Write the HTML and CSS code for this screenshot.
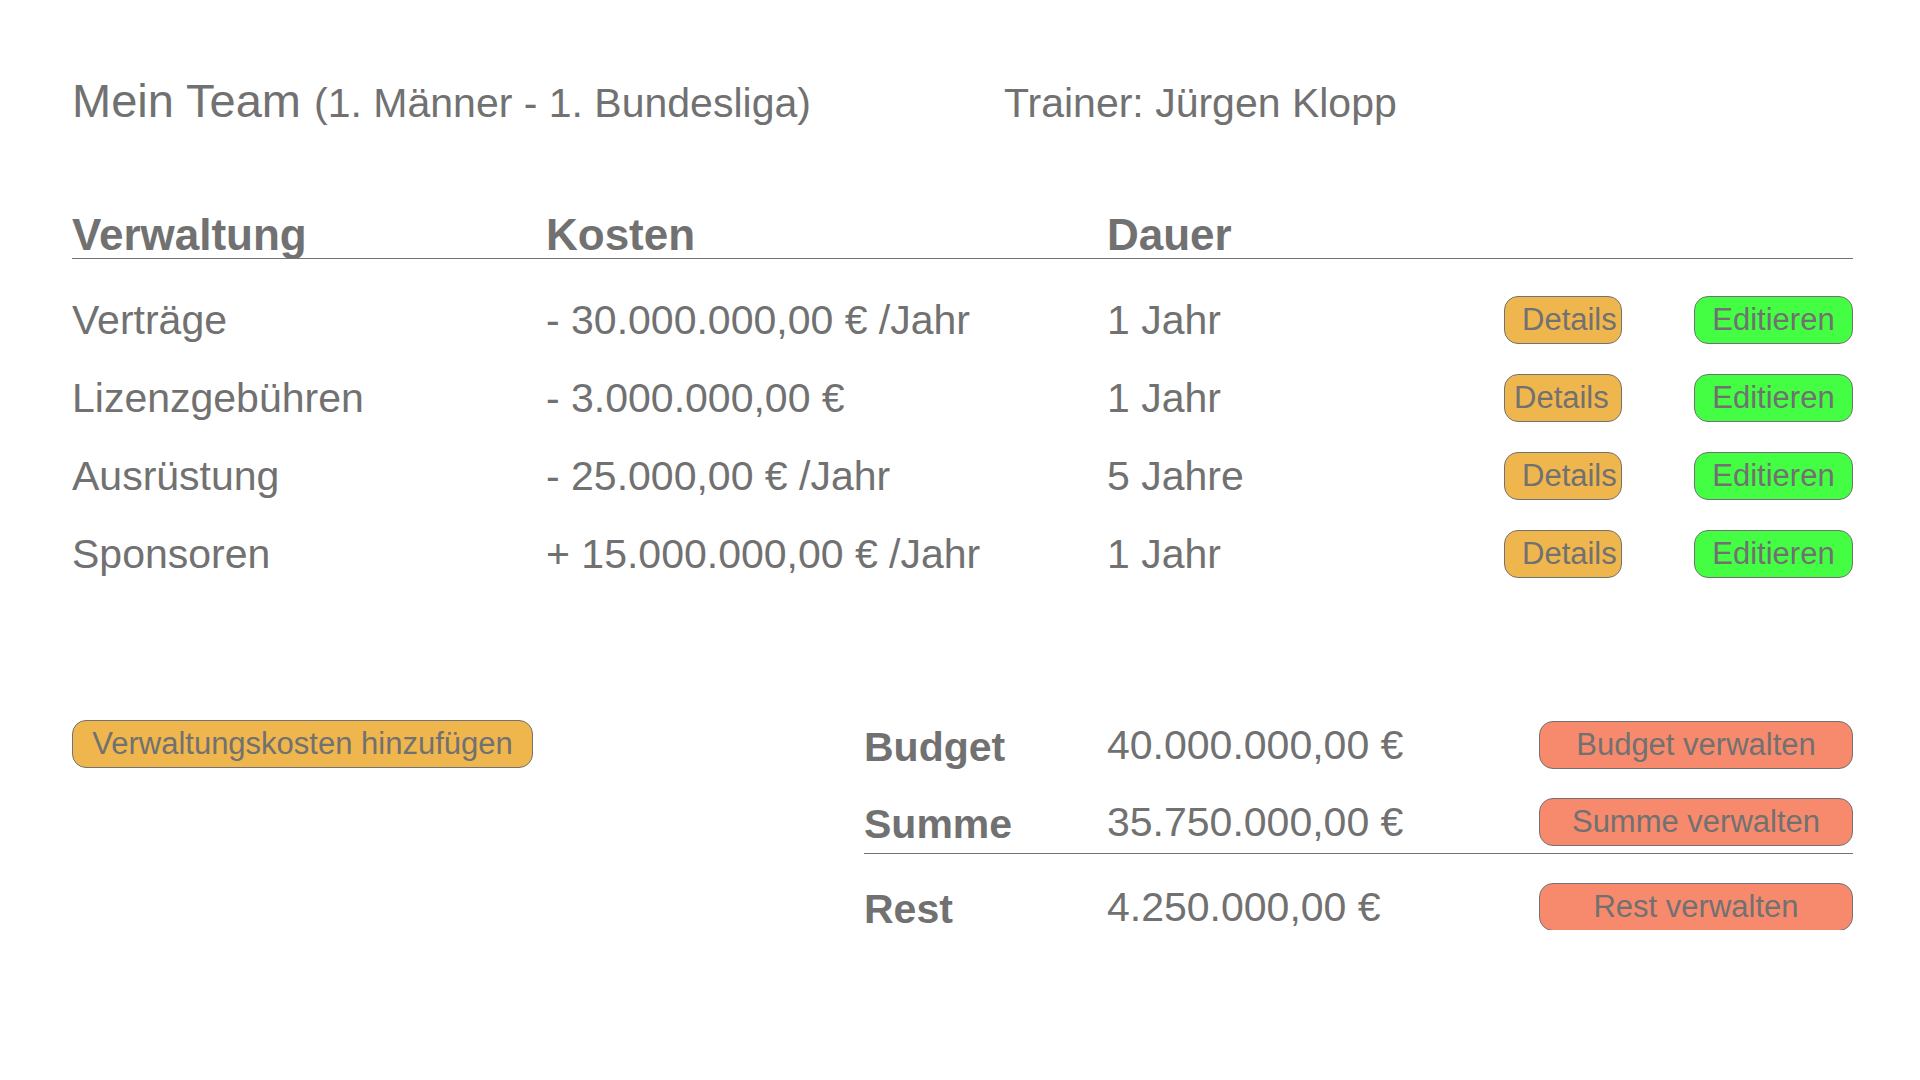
FILE: index.html
```html
<!DOCTYPE html>
<html lang="de">
<head>
<meta charset="utf-8">
<title>Mein Team</title>
<link rel="stylesheet" href="styles.css">
</head>
<body>
<div class="page">
  <header class="top">
    <h1 class="title">Mein Team <span class="title-sub">(1. Männer - 1. Bundesliga)</span></h1>
    <div class="trainer">Trainer: Jürgen Klopp</div>
  </header>

  <section class="costs">
    <div class="costs-head">
      <div>Verwaltung</div>
      <div>Kosten</div>
      <div>Dauer</div>
    </div>
    <div class="cost-rows">
      <div class="cost-row">
        <div>Verträge</div>
        <div>- 30.000.000,00 € /Jahr</div>
        <div>1 Jahr</div>
        <div><button class="btn btn-details">Details</button></div>
        <div><button class="btn btn-edit">Editieren</button></div>
      </div>
      <div class="cost-row">
        <div>Lizenzgebühren</div>
        <div>- 3.000.000,00 €</div>
        <div>1 Jahr</div>
        <div><button class="btn btn-details btn-details-centered">Details</button></div>
        <div><button class="btn btn-edit btn-edit-raised">Editieren</button></div>
      </div>
      <div class="cost-row">
        <div>Ausrüstung</div>
        <div>- 25.000,00 € /Jahr</div>
        <div>5 Jahre</div>
        <div><button class="btn btn-details">Details</button></div>
        <div><button class="btn btn-edit">Editieren</button></div>
      </div>
      <div class="cost-row">
        <div>Sponsoren</div>
        <div>+ 15.000.000,00 € /Jahr</div>
        <div>1 Jahr</div>
        <div><button class="btn btn-details">Details</button></div>
        <div><button class="btn btn-edit">Editieren</button></div>
      </div>
    </div>
  </section>

  <section class="bottom">
    <button class="btn btn-add">Verwaltungskosten hinzufügen</button>
    <div class="summary">
      <div class="sum-row">
        <div class="sum-label">Budget</div>
        <div>40.000.000,00 €</div>
        <div><button class="btn btn-manage">Budget verwalten</button></div>
      </div>
      <div class="sum-row">
        <div class="sum-label">Summe</div>
        <div>35.750.000,00 €</div>
        <div><button class="btn btn-manage">Summe verwalten</button></div>
      </div>
      <div class="sum-divider"></div>
      <div class="sum-row">
        <div class="sum-label">Rest</div>
        <div>4.250.000,00 €</div>
        <div><button class="btn btn-manage">Rest verwalten</button></div>
      </div>
    </div>
  </section>
</div>
</body>
</html>
```

FILE: styles.css
```css
* {
  box-sizing: border-box;
}

html, body {
  margin: 0;
  background: #ffffff;
}

body {
  font-family: "Liberation Sans", Arial, sans-serif;
  color: #717171;
}

.page {
  width: 1920px;
  padding: 74px 0 0 72px;
}

/* ---------- top line ---------- */
.top {
  display: grid;
  grid-template-columns: 932px auto;
  align-items: baseline;
}

.title {
  margin: 0;
  font-size: 47px;
  font-weight: normal;
  line-height: 54px;
}

.title-sub {
  font-size: 41px;
  line-height: 1;
}

.trainer {
  font-size: 41px;
  line-height: 46px;
}

/* ---------- cost table ---------- */
.costs {
  width: 1781px;
  margin-top: 84px;
}

.costs-head,
.cost-row {
  display: grid;
  grid-template-columns: 474px 561px 397px 190px 159px;
}

.costs-head {
  font-size: 44px;
  font-weight: bold;
  line-height: 46px;
  border-bottom: 1px solid #737373;
}

.cost-rows {
  padding-top: 22px;
}

.cost-row {
  height: 78px;
  align-items: center;
  font-size: 41px;
  line-height: 46px;
}

/* ---------- buttons ---------- */
.btn {
  display: block;
  height: 48px;
  margin: 0;
  padding: 0;
  border: 1px solid #727272;
  border-radius: 14px;
  font-family: inherit;
  font-size: 31px;
  line-height: 46px;
  color: #717171;
  text-align: center;
  white-space: nowrap;
  cursor: pointer;
}

.btn-details {
  width: 118px;
  background: #f0b64e;
  text-align: left;
  padding-left: 17px;
}

.btn-details-centered {
  padding-left: 9px;
}

.btn-edit {
  width: 159px;
  background: #44fe44;
}

.btn-edit-raised {
  line-height: 40px;
}

.btn-add {
  width: 461px;
  background: #f0b64e;
}

.btn-manage {
  width: 314px;
  background: #f78a6c;
}

/* ---------- bottom section ---------- */
.bottom {
  display: flex;
  align-items: flex-start;
  width: 1781px;
  margin-top: 127px;
}

.summary {
  margin-left: auto;
  width: 989px;
}

.sum-row {
  display: grid;
  grid-template-columns: 243px 432px 314px;
  align-items: center;
  height: 48px;
  font-size: 41px;
  line-height: 46px;
}

.sum-row + .sum-row {
  margin-top: 29px;
}

.sum-label {
  font-size: 41px;
  font-weight: bold;
  padding-top: 4px;
}

.sum-divider {
  height: 1px;
  background: #737373;
  margin-top: 8px;
  margin-bottom: 28px;
}
```
